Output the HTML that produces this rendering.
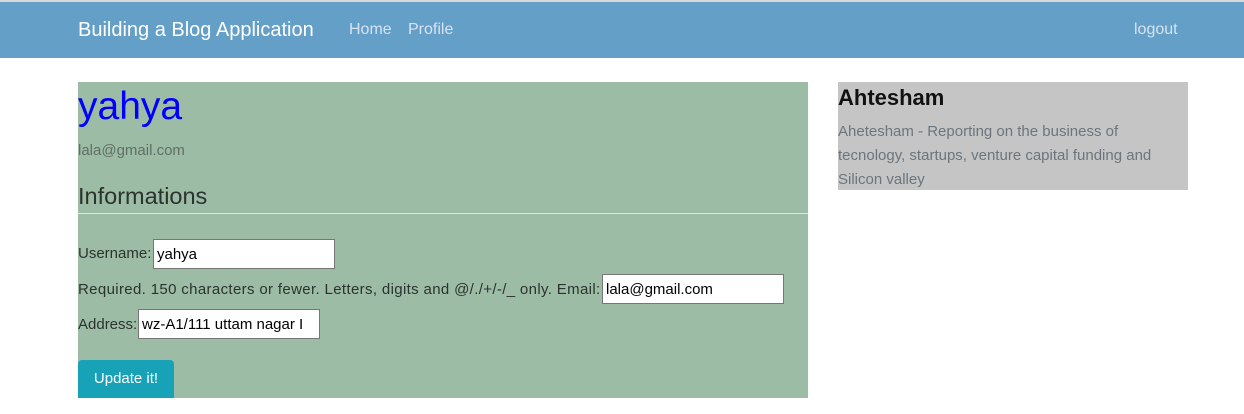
<!DOCTYPE html>
<html><head><style>
*{margin:0;padding:0;box-sizing:border-box}
body{width:1244px;height:414px;background:#fff;font-family:"Liberation Sans",sans-serif;position:relative;overflow:hidden}
.a{position:absolute;white-space:nowrap}
input{position:absolute;border:1px solid #767676;background:#fff;font:15px "Liberation Sans",sans-serif;padding:0 3px;color:#000}
</style></head><body>
<div class="a" style="left:0;top:0;width:1244px;height:2px;background:#d8d8d8"></div>
<div class="a" style="left:0;top:2px;width:1244px;height:56px;background:#649fc8"></div>
<div class="a" style="left:78px;top:19px;font-size:20px;color:#fff">Building a Blog Application</div>
<div class="a" style="left:349px;top:21px;font-size:16px;color:#d6e3ef">Home</div>
<div class="a" style="left:408px;top:21px;font-size:16px;color:#d6e3ef">Profile</div>
<div class="a" style="left:1134px;top:21px;font-size:16px;color:#d6e3ef">logout</div>

<div class="a" style="left:78px;top:82px;width:730px;height:316px;background:#9dbca5"></div>
<div class="a" style="left:78px;top:85px;font-size:39px;color:#0000ff">yahya</div>
<div class="a" style="left:78px;top:142px;font-size:15px;color:#5f6f66">lala@gmail.com</div>
<div class="a" style="left:78px;top:183px;font-size:23.5px;color:#2b332e">Informations</div>
<div class="a" style="left:78px;top:213px;width:730px;height:1px;background:#dfe8e1"></div>
<div class="a" style="left:78px;top:245px;font-size:15px;color:#2b332e">Username:</div>
<input style="left:153px;top:239px;width:182px;height:30px" value="yahya">
<div class="a" style="left:78px;top:281px;font-size:15px;letter-spacing:0.35px;color:#2b332e">Required. 150 characters or fewer. Letters, digits and @/./+/-/_ only. Email:</div>
<input style="left:602px;top:274px;width:182px;height:30px" value="lala@gmail.com">
<div class="a" style="left:78px;top:316px;font-size:15px;color:#2b332e">Address:</div>
<input style="left:138px;top:309px;width:182px;height:30px" value="wz-A1/111 uttam nagar I">
<div class="a" style="left:78px;top:360px;width:96px;height:38px;background:#17a2b8;border-radius:4px 4px 0 0;color:#fff;font-size:15px;text-align:center;line-height:38px">Update it!</div>

<div class="a" style="left:838px;top:82px;width:350px;height:108px;background:#c5c5c5"></div>
<div class="a" style="left:838px;top:85px;font-size:22px;font-weight:bold;color:#111">Ahtesham</div>
<div class="a" style="left:838px;top:120px;width:350px;white-space:normal;font-size:15px;line-height:24px;color:#6c757d">Ahetesham - Reporting on the business of tecnology, startups, venture capital funding and Silicon valley</div>
</body></html>
